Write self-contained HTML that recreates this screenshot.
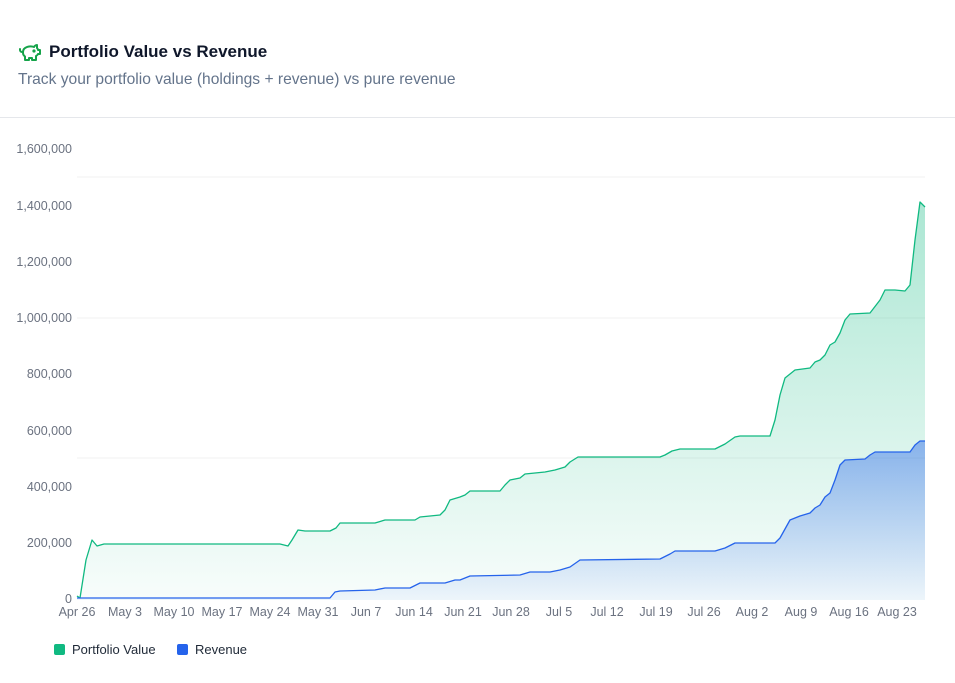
<!DOCTYPE html>
<html><head><meta charset="utf-8"><style>
body{margin:0;width:955px;height:683px;background:#fff;font-family:"Liberation Sans",sans-serif;position:relative;overflow:hidden}
.t{position:absolute;left:49px;top:42px;font-size:17px;font-weight:bold;color:#0f172a}
.s{position:absolute;left:18px;top:71px;font-size:15.6px;color:#64748b}
.hr{position:absolute;left:0;top:117px;width:955px;height:1px;background:#e5e7eb}
svg{position:absolute;left:0;top:0}
.ax{font-size:12.5px;fill:#6b7280}
.lg{position:absolute;top:642px;font-size:13px;color:#1f2937}
.sw{display:inline-block;width:11px;height:11px;border-radius:2px;vertical-align:-1px;margin-right:7px}
</style></head><body>
<svg width="24" height="24" viewBox="0 0 24 24" style="left:18px;top:40px" fill="none" stroke="#16a34a" stroke-width="2" stroke-linejoin="round" stroke-linecap="round"><path d="M19 5c-1.5 0-2.8 1.4-3 2-3.5-1.5-11-.3-11 5 0 1.8 0 3 2 4.5V20h4v-2h3v2h4v-4c1-.5 1.7-1 2-2h2v-4h-2c0-1-.5-1.5-1-2V5z"/><path d="M2 9v1c0 1.1.9 2 2 2h1"/><circle cx="16" cy="11" r=".6" fill="#16a34a"/></svg>
<div class="t">Portfolio Value vs Revenue</div>
<div class="s">Track your portfolio value (holdings + revenue) vs pure revenue</div>
<div class="hr"></div>
<svg width="955" height="683">
<defs>
<linearGradient id="g1" x1="0" y1="0" x2="0" y2="1"><stop offset="0" stop-color="#10b981" stop-opacity=".35"/><stop offset="1" stop-color="#10b981" stop-opacity=".03"/></linearGradient>
<linearGradient id="g2" x1="0" y1="0" x2="0" y2="1"><stop offset="0" stop-color="#2563eb" stop-opacity=".45"/><stop offset="1" stop-color="#2563eb" stop-opacity=".05"/></linearGradient>
</defs>
<g stroke="#f1f1f1"><line x1="77" x2="925" y1="177" y2="177"/><line x1="77" x2="925" y1="318" y2="318"/><line x1="77" x2="925" y1="458" y2="458"/></g>
<g class="ax" text-anchor="end">
<text x="72" y="153">1,600,000</text><text x="72" y="210">1,400,000</text><text x="72" y="266">1,200,000</text><text x="72" y="322">1,000,000</text><text x="72" y="378">800,000</text><text x="72" y="435">600,000</text><text x="72" y="491">400,000</text><text x="72" y="547">200,000</text><text x="72" y="603">0</text></g>
<g class="ax" text-anchor="middle">
<text x="77" y="616">Apr 26</text><text x="125" y="616">May 3</text><text x="174" y="616">May 10</text><text x="222" y="616">May 17</text><text x="270" y="616">May 24</text><text x="318" y="616">May 31</text><text x="366" y="616">Jun 7</text><text x="414" y="616">Jun 14</text><text x="463" y="616">Jun 21</text><text x="511" y="616">Jun 28</text><text x="559" y="616">Jul 5</text><text x="607" y="616">Jul 12</text><text x="656" y="616">Jul 19</text><text x="704" y="616">Jul 26</text><text x="752" y="616">Aug 2</text><text x="801" y="616">Aug 9</text><text x="849" y="616">Aug 16</text><text x="897" y="616">Aug 23</text></g>
<path fill="url(#g1)" stroke="none" d="M77,596 L80,598 L86,560 L92,540 L97,546 L104,544 L280,544 L288,546 L292,540 L298,530 L305,531 L330,531 L336,528 L340,523 L375,523 L385,520 L415,520 L420,517 L440,515 L445,510 L450,500 L460,497 L465,495 L470,491 L500,491 L505,485 L510,480 L520,478 L525,474 L545,472 L555,470 L565,467 L570,462 L578,457 L660,457 L665,455 L672,451 L680,449 L715,449 L725,444 L735,437 L740,436 L770,436 L775,420 L780,395 L785,378 L795,370 L810,368 L815,362 L820,360 L825,355 L830,345 L835,342 L840,333 L845,320 L850,314 L870,313 L880,300 L885,290 L895,290 L905,291 L910,285 L915,240 L920,202 L925,207 L925,600 L77,600Z"/>
<path fill="none" stroke="#10b981" stroke-width="1.3" stroke-linejoin="round" d="M77,596 L80,598 L86,560 L92,540 L97,546 L104,544 L280,544 L288,546 L292,540 L298,530 L305,531 L330,531 L336,528 L340,523 L375,523 L385,520 L415,520 L420,517 L440,515 L445,510 L450,500 L460,497 L465,495 L470,491 L500,491 L505,485 L510,480 L520,478 L525,474 L545,472 L555,470 L565,467 L570,462 L578,457 L660,457 L665,455 L672,451 L680,449 L715,449 L725,444 L735,437 L740,436 L770,436 L775,420 L780,395 L785,378 L795,370 L810,368 L815,362 L820,360 L825,355 L830,345 L835,342 L840,333 L845,320 L850,314 L870,313 L880,300 L885,290 L895,290 L905,291 L910,285 L915,240 L920,202 L925,207"/>
<path fill="url(#g2)" stroke="none" d="M77,598 L330,598 L335,592 L340,591 L375,590 L385,588 L410,588 L420,583 L445,583 L455,580 L460,580 L470,576 L520,575 L530,572 L550,572 L560,570 L570,567 L580,560 L660,559 L670,554 L675,551 L715,551 L725,548 L735,543 L775,543 L780,538 L790,520 L800,516 L810,513 L815,508 L820,505 L825,497 L830,493 L835,480 L840,465 L845,460 L865,459 L870,455 L875,452 L910,452 L915,445 L920,441 L925,441 L925,600 L77,600Z"/>
<path fill="none" stroke="#2563eb" stroke-width="1.3" stroke-linejoin="round" d="M77,598 L330,598 L335,592 L340,591 L375,590 L385,588 L410,588 L420,583 L445,583 L455,580 L460,580 L470,576 L520,575 L530,572 L550,572 L560,570 L570,567 L580,560 L660,559 L670,554 L675,551 L715,551 L725,548 L735,543 L775,543 L780,538 L790,520 L800,516 L810,513 L815,508 L820,505 L825,497 L830,493 L835,480 L840,465 L845,460 L865,459 L870,455 L875,452 L910,452 L915,445 L920,441 L925,441"/>
</svg>
<div class="lg" style="left:54px"><span class="sw" style="background:#10b981"></span>Portfolio Value</div>
<div class="lg" style="left:177px"><span class="sw" style="background:#2563eb"></span>Revenue</div>
</body></html>
